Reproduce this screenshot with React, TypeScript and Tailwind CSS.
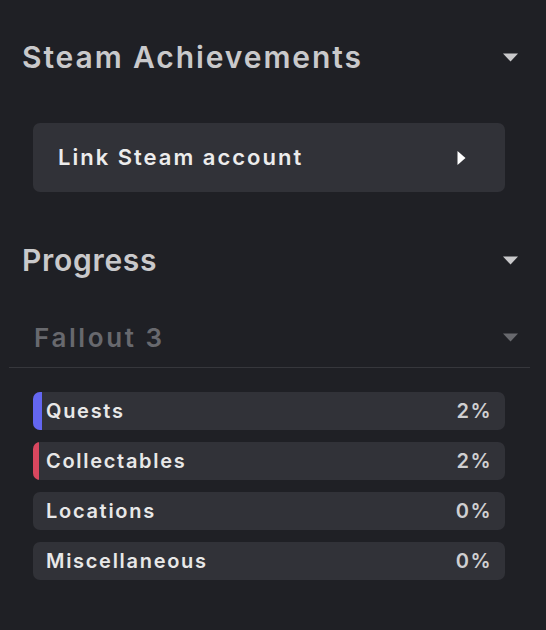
import React from "react";

const font = { fontFamily: "Inter, 'Noto Sans', sans-serif" };

function CaretDown({ className }: { className?: string }) {
  return (
    <svg width="15" height="9" viewBox="0 0 15 9" className={className}>
      <path d="M0 0.5 H15 L7.5 8.5 Z" fill="currentColor" />
    </svg>
  );
}

function CaretRight() {
  return (
    <svg width="9" height="14" viewBox="0 0 9 14" className="text-white">
      <path d="M0.5 0 L8.5 7 L0.5 14 Z" fill="currentColor" />
    </svg>
  );
}

const rows = [
  { label: "Quests", pct: "2%", bar: "w-[9px] bg-[#6366f1]" },
  { label: "Collectables", pct: "2%", bar: "w-[6px] bg-[#d9475f]" },
  { label: "Locations", pct: "0%", bar: "" },
  { label: "Miscellaneous", pct: "0%", bar: "" },
];

export default function App() {
  return (
    <div className="w-[546px] h-[630px] bg-[#1f2025] overflow-hidden" style={font}>
      <div className="flex items-center justify-between pl-[22px] pr-[28px] pt-[39px] h-[75px]">
        <h2 className="text-[30px] leading-[36px] font-semibold text-[#c9c9cb] tracking-[1.9px]">
          Steam Achievements
        </h2>
        <CaretDown className="text-[#c9c9cb]" />
      </div>

      <div className="mt-[48px] ml-[33px] w-[472px] h-[69px] rounded-[7px] bg-[#313238] flex items-center justify-between pl-[25px] pr-[39px]">
        <span className="text-[22px] font-semibold text-[#ececec] tracking-[2px]">Link Steam account</span>
        <CaretRight />
      </div>

      <div className="flex items-center justify-between pl-[22px] pr-[28px] mt-[50px] h-[36px]">
        <h2 className="text-[30px] leading-[36px] font-semibold text-[#c9c9cb] tracking-[0.7px]">Progress</h2>
        <CaretDown className="text-[#c9c9cb]" />
      </div>

      <div className="ml-[9px] w-[521px] mt-[43px] border-b border-[#36373c] pb-[14px]">
        <div className="flex items-center justify-between pl-[25px] pr-[12px] h-[32px]">
          <h3 className="text-[26px] font-semibold text-[#68696e] tracking-[2.6px]">Fallout 3</h3>
          <CaretDown className="text-[#68696e]" />
        </div>
      </div>

      <div className="ml-[33px] w-[472px] mt-[24px] flex flex-col gap-[12px]">
        {rows.map((r) => (
          <div key={r.label} className="h-[38px] rounded-[7px] bg-[#313238] flex items-center overflow-hidden relative">
            {r.bar && <div className={`absolute left-0 top-0 bottom-0 ${r.bar}`} />}
            <span className="pl-[13px] text-[20px] font-semibold text-[#e8e8e8] tracking-[1.7px] flex-1">{r.label}</span>
            <span className="pr-[13px] text-[20px] font-semibold text-[#cfcfd1] tracking-[1.5px]">{r.pct}</span>
          </div>
        ))}
      </div>
    </div>
  );
}
